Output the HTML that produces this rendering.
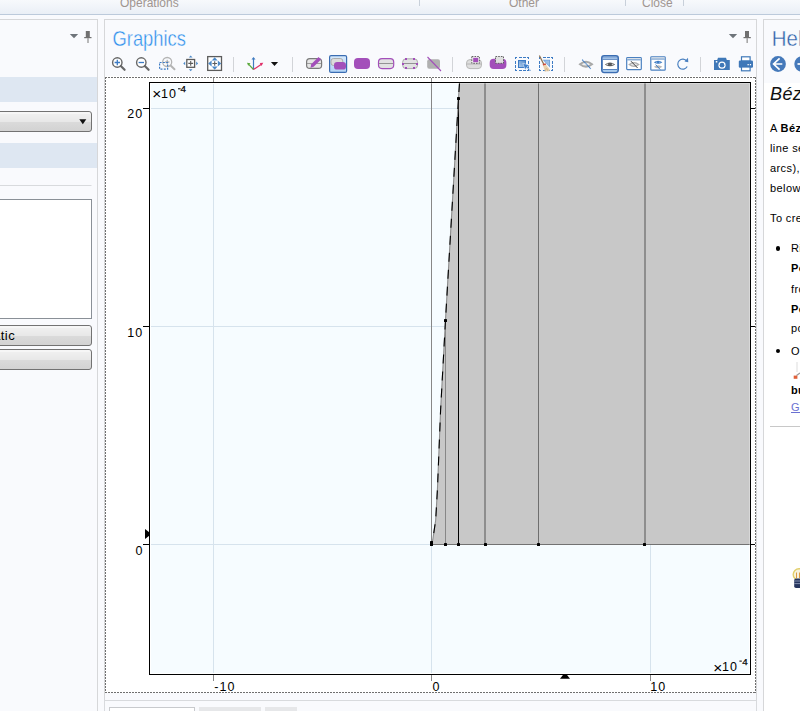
<!DOCTYPE html>
<html><head><meta charset="utf-8">
<style>
html,body{margin:0;padding:0;width:800px;height:711px;overflow:hidden;background:#f9fafd;font-family:"Liberation Sans",sans-serif;}
.a{position:absolute;}
#ribbon{left:0;top:0;width:800px;height:14px;background:linear-gradient(#f7f9fc,#eaeff6);border-bottom:1px solid #bccadb;}
.rt{position:absolute;top:-4px;font-size:12px;color:#a09590;}
.rs{position:absolute;top:0;width:1px;height:6px;background:#c8d0da;}
#lp{left:-2px;top:19px;width:98px;height:700px;border:1px solid #d6d7d9;background:#f9fafd;}
#gp{left:104px;top:19px;width:651px;height:700px;border:1px solid #d6d7d9;background:#f9fafd;}
#hp{left:763px;top:19px;width:60px;height:700px;border:1px solid #d6d7d9;background:#f9fafd;}
.help{font-family:"Liberation Sans",sans-serif;font-size:11px;color:#000;white-space:nowrap;letter-spacing:0.4px;}
</style></head><body>
<div id="ribbon" class="a">
  <div class="rt" style="left:120px">Operations</div>
  <div class="rs" style="left:419px"></div>
  <div class="rt" style="left:509px">Other</div>
  <div class="rs" style="left:625px"></div>
  <div class="rt" style="left:642px">Close</div>
  <div class="rs" style="left:683px"></div>
</div>

<div id="lp" class="a"></div>
<div id="gp" class="a"></div>
<div id="hp" class="a"></div>

<!-- left panel contents -->
<svg class="a" style="left:0;top:0" width="100" height="711">
  <path d="M69.8 34 L78.2 34 L74 38.2 Z" fill="#6e747a"/>
  <rect x="85.8" y="31" width="4" height="6.2" fill="#707070"/>
  <rect x="84.2" y="37" width="7.3" height="1.2" fill="#707070"/>
  <rect x="87.2" y="38" width="1.6" height="5" fill="#a8a8a8"/>
  <rect x="0" y="77" width="97" height="25" fill="#dee7f2"/>
  <rect x="0" y="143" width="97" height="25" fill="#dee7f2"/>
  <defs>
    <linearGradient id="btn" x1="0" y1="0" x2="0" y2="1">
      <stop offset="0" stop-color="#f2f2f2"/><stop offset="0.5" stop-color="#e8e8e8"/><stop offset="0.55" stop-color="#dadada"/><stop offset="1" stop-color="#d2d2d2"/>
    </linearGradient>
  </defs>
  <rect x="-9.5" y="111.5" width="101" height="20" rx="2.5" fill="url(#btn)" stroke="#727272" stroke-width="1"/>
  <rect x="-8" y="112.5" width="98" height="1" fill="#fff" opacity="0.8"/>
  <path d="M79.3 119.3 L86.3 119.3 L82.8 124.2 Z" fill="#111"/>
  <rect x="0" y="185" width="91.5" height="1" fill="#d8dadd"/>
  <rect x="-9.5" y="199.5" width="101" height="119" fill="#fff" stroke="#8a9097" stroke-width="1"/>
  <rect x="-9.5" y="325.5" width="101" height="20" rx="2.5" fill="url(#btn)" stroke="#727272" stroke-width="1"/>
  <rect x="-8" y="326.5" width="98" height="1" fill="#fff" opacity="0.8"/>
  <text x="-6.8" y="339.8" font-family="Liberation Sans" font-size="13" fill="#000" letter-spacing="0.4">atic</text>
  <rect x="-9.5" y="349.5" width="101" height="20" rx="2.5" fill="url(#btn)" stroke="#727272" stroke-width="1"/>
  <rect x="-8" y="350.5" width="98" height="1" fill="#fff" opacity="0.8"/>
</svg>

<!-- graphics title -->
<svg class="a" style="left:0;top:0" width="200" height="55"><text x="112.5" y="45.6" font-family="Liberation Sans" font-size="21.5" fill="#2e8fec" stroke="#f9fafd" stroke-width="0.4" textLength="73.5" lengthAdjust="spacingAndGlyphs">Graphics</text></svg>
<svg class="a" style="left:700px;top:0" width="60" height="50">
  <path d="M28.8 34 L37.2 34 L33 38.2 Z" fill="#6e747a"/>
  <rect x="45" y="31" width="4" height="6.2" fill="#707070"/>
  <rect x="43.5" y="37" width="7.3" height="1.2" fill="#707070"/>
  <rect x="46.4" y="38" width="1.6" height="5" fill="#a8a8a8"/>
</svg>

<!-- toolbar -->
<svg class="a" style="left:0;top:0" width="800" height="78">
  <defs>
    <linearGradient id="selbg" x1="0" y1="0" x2="0" y2="1">
      <stop offset="0" stop-color="#d6e9fc"/><stop offset="1" stop-color="#b3d4f6"/>
    </linearGradient>
  </defs>
  <!-- zoom in -->
  <circle cx="117.3" cy="62.5" r="4.7" fill="#fff" stroke="#676767" stroke-width="1.4"/>
  <line x1="120.8" y1="66" x2="124.6" y2="69.8" stroke="#676767" stroke-width="2.2" stroke-linecap="round"/>
  <path d="M114.6 62.5 H120 M117.3 59.8 V65.2" stroke="#3d7bc4" stroke-width="1.3"/>
  <!-- zoom out -->
  <circle cx="141.3" cy="62.5" r="4.7" fill="#fff" stroke="#676767" stroke-width="1.4"/>
  <line x1="144.8" y1="66" x2="148.6" y2="69.8" stroke="#676767" stroke-width="2.2" stroke-linecap="round"/>
  <path d="M138.6 62.5 H144" stroke="#3d7bc4" stroke-width="1.3"/>
  <!-- zoom box -->
  <circle cx="167.2" cy="62" r="4.5" fill="none" stroke="#b4b4b4" stroke-width="1.3"/>
  <line x1="170.6" y1="65.5" x2="174.5" y2="69.3" stroke="#b4b4b4" stroke-width="2" stroke-linecap="round"/>
  <path d="M165 62 H169.5 M167.2 59.8 V64.2" stroke="#999" stroke-width="0.9"/>
  <rect x="159.6" y="62.5" width="8" height="6.7" fill="none" stroke="#3d7bc4" stroke-width="1.2" stroke-dasharray="2 1.3"/>
  <!-- zoom extents small -->
  <rect x="186.8" y="59.5" width="7.8" height="7.8" fill="#fff" stroke="#5c5c5c" stroke-width="1.3"/>
  <path d="M188.3 63.4 H193.1 M190.7 61 V65.8" stroke="#5c5c5c" stroke-width="1.1"/>
  <g fill="#4a88c8">
    <path d="M188.9 57.5 L190.7 55.5 L192.5 57.5 Z"/>
    <path d="M188.9 69.3 L190.7 71.3 L192.5 69.3 Z"/>
    <path d="M185.2 61.6 L183.3 63.4 L185.2 65.2 Z"/>
    <path d="M196.2 61.6 L198.1 63.4 L196.2 65.2 Z"/>
  </g>
  <!-- zoom extents big -->
  <rect x="207.7" y="56.6" width="13.8" height="13.8" fill="#fff" stroke="#5c5c5c" stroke-width="1.3"/>
  <path d="M212.4 63.5 H217 M214.7 61.2 V65.8" stroke="#5c5c5c" stroke-width="1.1"/>
  <g fill="#4a88c8">
    <path d="M211.8 60.6 L214.7 57.2 L217.6 60.6 Z"/>
    <path d="M211.8 66.4 L214.7 69.8 L217.6 66.4 Z"/>
    <path d="M211.6 60.6 L208.2 63.5 L211.6 66.4 Z"/>
    <path d="M217.8 60.6 L221.2 63.5 L217.8 66.4 Z"/>
  </g>
  <rect x="233" y="57" width="1" height="15" fill="#d2d4d8"/>
  <!-- axis icon -->
  <path d="M253.5 69.5 V58.5" stroke="#3f7bc0" stroke-width="1.2"/>
  <path d="M251.5 59.5 L253.5 57 L255.5 59.5 Z" fill="#3f7bc0"/>
  <path d="M253.5 69.5 L248.5 64.2" stroke="#5aa83c" stroke-width="1.2"/>
  <path d="M247 62.8 L250.5 63.3 L248.2 65.7 Z" fill="#5aa83c"/>
  <path d="M253.5 69.5 L261.8 64" stroke="#e0306a" stroke-width="1.2"/>
  <path d="M263.3 62.8 L259.8 63 L261.4 66 Z" fill="#e0306a"/>
  <path d="M270.9 62 L278.1 62 L274.5 66 Z" fill="#111"/>
  <rect x="292" y="57" width="1" height="15" fill="#d2d4d8"/>
  <!-- edit -->
  <rect x="306.6" y="58.6" width="15" height="9.8" rx="3.2" fill="#e6e6e6" stroke="#7a7a7a" stroke-width="1.2"/>
  <path d="M307 63.5 H321" stroke="#8a8a8a" stroke-width="0.8"/>
  <path d="M310.5 67.8 L311.2 64.3 L318.5 57 L321 59.5 L313.7 66.8 Z" fill="#a34fba"/>
  <!-- selected -->
  <rect x="329.6" y="55.6" width="17" height="16.8" rx="1.5" fill="url(#selbg)" stroke="#3b6db2" stroke-width="1.2"/>
  <rect x="331" y="58.5" width="11.8" height="7" rx="2.5" fill="#dcdcdc" stroke="#a0a0a0" stroke-width="0.8"/>
  <rect x="334" y="62" width="12" height="7.6" rx="3.2" fill="#a34fba"/>
  <!-- filled -->
  <rect x="354" y="58" width="16" height="11" rx="4" fill="#a34fba"/>
  <!-- outline -->
  <rect x="378.5" y="58.6" width="15.2" height="10" rx="3.5" fill="#e2e2e2" stroke="#a34fba" stroke-width="1.2"/>
  <path d="M379 63.5 H393" stroke="#8a8a8a" stroke-width="0.9"/>
  <!-- dotted -->
  <rect x="402.6" y="58.8" width="15" height="9.8" rx="3.5" fill="#e2e2e2" stroke="#9a9a9a" stroke-width="0.8"/>
  <path d="M403 63.5 H417" stroke="#8a8a8a" stroke-width="0.9"/>
  <g fill="#a34fba">
    <rect x="405" y="58" width="2" height="2"/><rect x="413" y="58" width="2" height="2"/>
    <rect x="402" y="63" width="2" height="2"/><rect x="416" y="63" width="2" height="2"/>
    <rect x="405" y="67" width="2" height="2"/><rect x="413" y="67" width="2" height="2"/>
  </g>
  <!-- gray square diag -->
  <rect x="427.2" y="59.2" width="12.8" height="9.6" rx="2" fill="#b0b0b0"/>
  <path d="M427.5 57 L441 71" stroke="#a34fba" stroke-width="1.1"/>
  <rect x="452" y="57" width="1" height="15" fill="#d2d4d8"/>
  <!-- icon A -->
  <rect x="466.5" y="59.6" width="15" height="9" rx="3.5" fill="#dedede" stroke="#b8b8b8" stroke-width="1"/>
  <path d="M467 64 H481" stroke="#aaa" stroke-width="0.8"/>
  <rect x="471.8" y="56.5" width="7.6" height="6.8" fill="#f0f0f0" stroke="#555" stroke-width="0.9" stroke-dasharray="1.6 1.1"/>
  <rect x="473.2" y="57.8" width="5" height="4.4" fill="#a34fba"/>
  <!-- icon B -->
  <rect x="489.7" y="58.8" width="16.7" height="10.1" rx="4" fill="#a34fba"/>
  <rect x="495.5" y="56.5" width="8" height="6.8" fill="#e0e0e0" stroke="#555" stroke-width="0.9" stroke-dasharray="1.6 1.1"/>
  <!-- icon C -->
  <g fill="#3d7bc4" shape-rendering="crispEdges"><rect x="515" y="57" width="2" height="1"/><rect x="515" y="70" width="2" height="1"/><rect x="515" y="57" width="1" height="2"/><rect x="528" y="57" width="1" height="2"/><rect x="519" y="57" width="3" height="1"/><rect x="519" y="70" width="3" height="1"/><rect x="515" y="61" width="1" height="3"/><rect x="528" y="61" width="1" height="3"/><rect x="523" y="57" width="3" height="1"/><rect x="523" y="70" width="3" height="1"/><rect x="515" y="65" width="1" height="3"/><rect x="528" y="65" width="1" height="3"/><rect x="527" y="57" width="2" height="1"/><rect x="527" y="70" width="2" height="1"/><rect x="515" y="69" width="1" height="2"/><rect x="528" y="69" width="1" height="2"/></g>
  <defs><linearGradient id="gC" x1="1" y1="0" x2="0" y2="1"><stop offset="0" stop-color="#4f86c8"/><stop offset="1" stop-color="#b4d0ee"/></linearGradient></defs>
  <rect x="518.5" y="60.5" width="7" height="7" fill="url(#gC)" stroke="#3d7bc4" stroke-width="1"/>
  <path d="M522.8 63.2 L529.6 65.2 L527.3 66.8 L525.2 69.8 Z" fill="#3f80cc" stroke="#fff" stroke-width="0.5"/>
  <path d="M527 67.3 L530.5 70.8" stroke="#3d7bc4" stroke-width="1.1" stroke-dasharray="1.2 0.6"/>
  <!-- icon D -->
  <g fill="#3d7bc4" shape-rendering="crispEdges"><rect x="539" y="57" width="2" height="1"/><rect x="539" y="70" width="2" height="1"/><rect x="539" y="57" width="1" height="2"/><rect x="552" y="57" width="1" height="2"/><rect x="543" y="57" width="3" height="1"/><rect x="543" y="70" width="3" height="1"/><rect x="539" y="61" width="1" height="3"/><rect x="552" y="61" width="1" height="3"/><rect x="547" y="57" width="3" height="1"/><rect x="547" y="70" width="3" height="1"/><rect x="539" y="65" width="1" height="3"/><rect x="552" y="65" width="1" height="3"/><rect x="551" y="57" width="2" height="1"/><rect x="551" y="70" width="2" height="1"/><rect x="539" y="69" width="1" height="2"/><rect x="552" y="69" width="1" height="2"/></g>
  <path d="M542.7 59.8 L550 59.8 L550 67.6 Z" fill="#6f9fd6"/>
  <path d="M549.2 60.6 L549.2 66 L544.4 60.6 Z" fill="#9cc0e6"/>
  <path d="M539.6 56 L543.9 64.5" stroke="#8f7356" stroke-width="1.3" stroke-linecap="round"/>
  <path d="M542.6 64.2 L545.6 63.3 L546.2 65 L543.2 65.9 Z" fill="#d04a3a"/>
  <path d="M543 65.6 L546 64.7 L550.2 70.3 L548.2 71.3 L545 71.6 Z" fill="#ecd3ad"/>
  <path d="M545 71.5 L546.5 68 M548 71.2 L547 68.5" stroke="#b89a74" stroke-width="0.5"/>
  <rect x="564" y="57" width="1" height="15" fill="#d2d4d8"/>
  <!-- eye crossed -->
  <path d="M580 64.2 Q586 59.3 592 64.2 Q586 69.1 580 64.2 Z" fill="#f0f0f0" stroke="#a8a8a8" stroke-width="2"/>
  <path d="M582.2 59.6 L590.8 68.8" stroke="#3d7bc4" stroke-width="1.1" stroke-dasharray="1.3 0.4"/>
  <!-- selected eye window -->
  <rect x="601.9" y="55.9" width="16.2" height="16.4" rx="2.2" fill="#fff" stroke="#3b6db2" stroke-width="1.8"/>
  <rect x="602.8" y="56.8" width="14.4" height="2.6" fill="#bcd6f2"/>
  <rect x="602.8" y="56.8" width="14.4" height="0.7" fill="#5a88c8"/>
  <rect x="602.8" y="58.8" width="14.4" height="0.9" fill="#3b6db2"/>
  <rect x="602.8" y="69.3" width="14.4" height="2.2" fill="#a8cdf0"/>
  <rect x="602.8" y="69.2" width="14.4" height="0.8" fill="#3b6db2"/>
  <path d="M604.9 64.4 Q609.9 60.6 615.1 64.4 Q609.9 68.2 604.9 64.4 Z" fill="#5a5a5a"/>
  <circle cx="607.3" cy="64.4" r="0.9" fill="#cfcfcf"/>
  <circle cx="612.6" cy="64.4" r="0.9" fill="#cfcfcf"/>
  <!-- window eye crossed -->
  <rect x="626.7" y="57.6" width="14.6" height="12" rx="0.8" fill="#fff" stroke="#4a80c0" stroke-width="1.2"/>
  <rect x="627.3" y="58.2" width="13.4" height="1.2" fill="#dfe3e8"/>
  <rect x="627.3" y="59.4" width="13.4" height="0.9" fill="#4a80c0"/>
  <path d="M629.3 64.5 Q634 60.8 638.7 64.5 Q634 68.2 629.3 64.5 Z" fill="#e8e8e8" stroke="#b0b0b0" stroke-width="1.4"/>
  <path d="M631 61.2 L637.6 68" stroke="#444" stroke-width="1"/>
  <!-- window eyes -->
  <rect x="650.8" y="56.8" width="14.4" height="13.4" rx="0.8" fill="#fff" stroke="#4a80c0" stroke-width="1.2"/>
  <rect x="651.4" y="57.4" width="13.2" height="1.2" fill="#dfe3e8"/>
  <rect x="651.4" y="58.6" width="13.2" height="0.9" fill="#4a80c0"/>
  <path d="M653.8 62.2 Q658.1 59.2 662.4 62.2 Q658.1 65.2 653.8 62.2 Z" fill="#3d7bc4"/>
  <circle cx="656.5" cy="62.2" r="0.7" fill="#8fb4de"/><circle cx="659.8" cy="62.2" r="0.7" fill="#8fb4de"/>
  <path d="M653.8 66.8 Q658.1 63.8 662.4 66.8 Q658.1 69.8 653.8 66.8 Z" fill="#b8b8b8"/>
  <path d="M655.6 64.6 L660.2 69.5" stroke="#3d7bc4" stroke-width="1"/>
  <!-- refresh -->
  <path d="M686.8 61.2 A5 5 0 1 0 687.2 66.5" fill="none" stroke="#4a80c0" stroke-width="1.2"/>
  <path d="M684.5 61.6 L688 57.8 L688.3 62.3 Z" fill="#4a80c0"/>
  <rect x="700" y="57" width="1" height="15" fill="#d2d4d8"/>
  <!-- camera -->
  <path d="M714 60 H717.2 L718 57.8 H726 L726.8 60 H729.8 V70 H714 Z" fill="#3f78b8"/>
  <circle cx="722" cy="65.2" r="3.6" fill="#fff"/>
  <circle cx="722" cy="65.2" r="2.4" fill="#3f78b8"/>
  <rect x="715.8" y="61" width="1.5" height="1.5" fill="#fff"/>
  <!-- printer -->
  <rect x="741.5" y="56.8" width="8.6" height="4.3" fill="#fff" stroke="#3f78b8" stroke-width="1.2"/>
  <rect x="738.8" y="60.5" width="14.2" height="7.3" rx="1.2" fill="#3f78b8"/>
  <rect x="741.5" y="67" width="8.6" height="3.8" fill="#fff" stroke="#3f78b8" stroke-width="1.2"/>
  <rect x="747.5" y="64" width="1.3" height="1.3" fill="#fff"/><rect x="749.8" y="64" width="1.3" height="1.3" fill="#fff"/>
</svg>

<!-- plot -->
<div class="a" style="left:105px;top:76px;width:651px;height:617px;background:#fff;"></div>
<div class="a" style="left:105px;top:77px;width:651px;height:1px;background:repeating-linear-gradient(to right,#6f6f6f 0 2px,transparent 2px 3px);"></div>
<div class="a" style="left:105px;top:692px;width:651px;height:1px;background:repeating-linear-gradient(to right,#6f6f6f 0 2px,transparent 2px 3px);"></div>
<div class="a" style="left:105px;top:77px;width:1px;height:616px;background:repeating-linear-gradient(to bottom,#6f6f6f 0 2px,transparent 2px 3px);"></div>
<div class="a" style="left:755px;top:77px;width:1px;height:616px;background:repeating-linear-gradient(to bottom,#6f6f6f 0 2px,transparent 2px 3px);"></div>
<svg class="a" style="left:0;top:0" width="800" height="711">
  <rect x="151" y="84" width="598" height="589" fill="#f6fcff"/>
  <g fill="#d6e3ed" shape-rendering="crispEdges">
    <rect x="151" y="108" width="598" height="1"/>
    <rect x="151" y="326" width="598" height="1"/>
    <rect x="151" y="544" width="598" height="1"/>
    <rect x="213" y="84" width="1" height="589"/>
    <rect x="431" y="84" width="1" height="589"/>
    <rect x="650" y="84" width="1" height="589"/>
  </g>
  <path d="M459.5 83 L458.5 98 L445.5 320 L440.6 410 L437.4 490 L435.7 520 L432.75 540 L431.5 544 L750 544 L750 83 Z" fill="#c8c8c8"/>
  <g fill="#878787" shape-rendering="crispEdges">
    <rect x="431" y="83" width="1" height="461"/>
    <rect x="445" y="320" width="1" height="224"/>
    <rect x="484" y="83" width="2" height="461" fill="#8e8e8e"/>
    <rect x="538" y="83" width="1" height="461" fill="#6f6f6f"/>
    <rect x="644" y="83" width="2" height="461" fill="#8e8e8e"/>
    <rect x="431" y="544" width="319" height="1" fill="#727272"/>
  </g>
  <rect x="458" y="98" width="1" height="446" fill="#000" shape-rendering="crispEdges"/>
  <path d="M459.5 83 L458.5 98 L445.5 320 L440.6 410 L437.4 490 L435.7 520 L432.75 540 L431.5 544" fill="none" stroke="#8c8c8c" stroke-width="1.1"/>
  <path d="M459.5 83 L458.5 98 L445.5 320 L440.6 410 L437.4 490 L435.7 520 L432.75 540 L431.5 544" fill="none" stroke="#000" stroke-width="1.1" stroke-dasharray="9 8"/>
  <g fill="#000">
    <rect x="430" y="541" width="3" height="5" rx="0.6"/>
    <rect x="444" y="543" width="3" height="3" rx="0.6"/>
    <rect x="457" y="543" width="3" height="3" rx="0.6"/>
    <rect x="484" y="543" width="3" height="3" rx="0.6"/>
    <rect x="537" y="543" width="3" height="3" rx="0.6"/>
    <rect x="643" y="543" width="3" height="3" rx="0.6"/>
    <rect x="444" y="319" width="3" height="3" rx="0.6"/>
    <rect x="457" y="97" width="3" height="3" rx="0.6"/>
  </g>
  <!-- inner white frame -->
  <rect x="150.5" y="83.5" width="599" height="590" fill="none" stroke="rgba(255,255,255,0.3)" stroke-width="1"/>
  <!-- axes box -->
  <rect x="149.5" y="82.5" width="601" height="592" fill="none" stroke="#000" stroke-width="1" shape-rendering="crispEdges"/>
  <!-- ticks -->
  <g fill="#000" shape-rendering="crispEdges">
    <rect x="143" y="108" width="6" height="1"/>
    <rect x="143" y="326" width="6" height="1"/>
    <rect x="143" y="544" width="6" height="1"/>
    <rect x="751" y="108" width="4" height="1"/>
    <rect x="751" y="326" width="4" height="1"/>
    <rect x="751" y="544" width="4" height="1"/>
  </g>
  <g fill="#8a8a8a" shape-rendering="crispEdges">
    <rect x="213" y="675" width="1" height="6"/>
    <rect x="431" y="675" width="1" height="6"/>
    <rect x="650" y="675" width="1" height="6"/>
    <rect x="213" y="78" width="1" height="4"/>
    <rect x="431" y="78" width="1" height="4"/>
    <rect x="650" y="78" width="1" height="4"/>
  </g>
  <path d="M145 529 L149.2 532.3 L149.2 535.7 L145 539 Z" fill="#000"/>
  <path d="M560 678.8 L563.3 674.5 L566.7 674.5 L570 678.8 Z" fill="#000"/>
  <g font-family="Liberation Sans" font-size="12.5" fill="#000" letter-spacing="1">
    <text x="127.3" y="118">20</text>
    <text x="127.3" y="337">10</text>
    <text x="135.5" y="554.8">0</text>
    <text x="214.3" y="691">-10</text>
    <text x="432.6" y="691">0</text>
    <text x="650.3" y="691">10</text>
    <text x="152.2" y="99.3" font-size="15.5" letter-spacing="0">×</text>
    <text x="161" y="98.2">10</text>
    <rect x="178" y="88.3" width="2.6" height="1" fill="#000"/>
    <text x="180.6" y="92.3" font-size="9.8" letter-spacing="0" stroke="#000" stroke-width="0.25">4</text>
    <text x="713.2" y="672.5" font-size="15.5" letter-spacing="0">×</text>
    <text x="722" y="671.4">10</text>
    <rect x="739.4" y="660.6" width="2.4" height="1" fill="#000"/>
    <text x="742.2" y="664.6" font-size="9.8" letter-spacing="0" stroke="#000" stroke-width="0.25">4</text>
  </g>
</svg>

<!-- help panel -->
<div class="a" style="left:764px;top:83px;width:40px;height:630px;background:#fff;"></div>
<svg class="a" style="left:700px;top:0" width="100" height="55"><text x="771.8" y="45.7" transform="translate(-700 0)" textLength="42" lengthAdjust="spacingAndGlyphs" font-family="Liberation Sans" font-size="21.5" fill="#2b5ea8" stroke="#f9fafd" stroke-width="0.4">Help</text></svg>
<svg class="a" style="left:760px;top:50px" width="40" height="30">
  <circle cx="18" cy="14" r="7.9" fill="#4579ba"/>
  <path d="M22.3 14 L13.8 14 M19.6 8.4 L13.6 14 L19.6 19.6" stroke="#fff" stroke-width="1.7" fill="none"/>
  <circle cx="42.2" cy="14" r="7.9" fill="#4579ba"/>
  <path d="M37.5 14 L43 14" stroke="#fff" stroke-width="1.7"/>
</svg>
<div class="a" style="left:764px;top:83px;width:36px;height:628px;overflow:hidden;">
  <div class="a help" style="left:6px;top:0.5px;font-size:18px;font-style:italic;color:#111;">Bézier Polygon</div>
</div>
<div class="a" style="left:764px;top:83px;width:36px;height:628px;overflow:hidden;font-size:11px;color:#000;">
  <div class="a help" style="left:6px;top:38.5px;">A <b>Bézier polygon</b> is</div>
  <div class="a help" style="left:6px;top:58.5px;">line segments</div>
  <div class="a help" style="left:6px;top:78.5px;">arcs), and</div>
  <div class="a help" style="left:6px;top:98.5px;">below.</div>
  <div class="a help" style="left:6px;top:128.5px;">To create</div>
  <div class="a help" style="left:11.5px;top:163px;width:4.5px;height:4.5px;border-radius:50%;background:#000;"></div>
  <div class="a help" style="left:27px;top:158.5px;">Right-click</div>
  <div class="a help" style="left:27px;top:179px;font-weight:bold;">Polygon</div>
  <div class="a help" style="left:27px;top:199.5px;">from</div>
  <div class="a help" style="left:27px;top:220px;font-weight:bold;">Polygon</div>
  <div class="a help" style="left:27px;top:239px;">polygon</div>
  <div class="a help" style="left:11.5px;top:265.5px;width:4.5px;height:4.5px;border-radius:50%;background:#000;"></div>
  <div class="a help" style="left:27px;top:262px;">On the</div>
  <div class="a help" style="left:27px;top:300.5px;font-weight:bold;">button</div>
  <div class="a help" style="left:27px;top:318px;color:#6a70d2;text-decoration:underline;">Geometry</div>
  <div class="a" style="left:6px;top:343px;width:40px;height:1px;background:#c8c8c8;"></div>
</div>
<svg class="a" style="left:780px;top:355px" width="20" height="30">
  <path d="M17 7 V17" stroke="#ddd" stroke-width="1"/>
  <path d="M16.5 20.5 L20 18" stroke="#999" stroke-width="1.2"/>
  <rect x="13.7" y="20.6" width="3.7" height="3.2" fill="#e0603a"/>
</svg>
<svg class="a" style="left:780px;top:560px" width="20" height="32">
  <circle cx="19" cy="14.5" r="5.8" fill="#f6f2dc" stroke="#e2cf6a" stroke-width="1.4"/>
  <path d="M16.5 12.5 V18 M19.5 12.5 V18" stroke="#d89030" stroke-width="0.9"/>
  <rect x="14.2" y="18.5" width="8" height="9.5" rx="1.8" fill="#27365f"/>
  <path d="M14.2 21 H22 M14.2 23.6 H22" stroke="#8d9ab8" stroke-width="0.9"/>
</svg>

<!-- bottom tabs -->
<div class="a" style="left:104px;top:700px;width:651px;height:20px;border:1px solid #d8dadd;background:#f9fafd;"></div>
<div class="a" style="left:109px;top:707px;width:84px;height:10px;border:1px solid #c8cacd;background:#fff;"></div>
<div class="a" style="left:199px;top:707px;width:62px;height:10px;background:#e6e7e9;"></div>
<div class="a" style="left:265px;top:707px;width:32px;height:10px;background:#e6e7e9;"></div>
</body></html>
